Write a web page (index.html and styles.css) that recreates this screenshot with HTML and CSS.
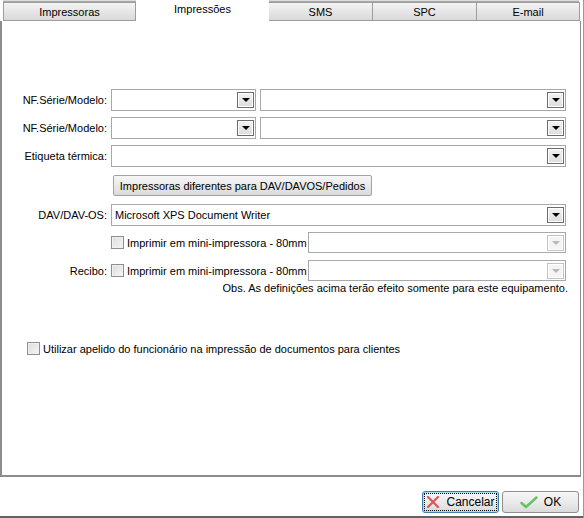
FILE: index.html
```html
<!DOCTYPE html>
<html>
<head>
<meta charset="utf-8">
<link rel="stylesheet" href="styles.css">
</head>
<body>
<div class="window">
  <div class="toprow"></div>
  <div class="tabs">
    <div class="tab t1">Impressoras</div>
    <div class="tab active t2">Impressões</div>
    <div class="tab t3">SMS</div>
    <div class="tab t4">SPC</div>
    <div class="tab t5">E-mail</div>
  </div>
  <div class="panel">
    <div class="row">
      <label class="lbl">NF.Série/Modelo:</label>
      <div class="combo w1"><span class="val"></span><span class="btn"><span class="arrow"></span></span></div>
      <div class="combo w2"><span class="val"></span><span class="btn"><span class="arrow"></span></span></div>
    </div>
    <div class="row">
      <label class="lbl">NF.Série/Modelo:</label>
      <div class="combo w1"><span class="val"></span><span class="btn"><span class="arrow"></span></span></div>
      <div class="combo w2"><span class="val"></span><span class="btn"><span class="arrow"></span></span></div>
    </div>
    <div class="row">
      <label class="lbl">Etiqueta térmica:</label>
      <div class="combo wfull"><span class="val"></span><span class="btn"><span class="arrow"></span></span></div>
    </div>
    <div class="btnrow">
      <button class="wbtn">Impressoras diferentes para DAV/DAVOS/Pedidos</button>
    </div>
    <div class="row dav">
      <label class="lbl">DAV/DAV-OS:</label>
      <div class="combo wfull"><span class="val">Microsoft XPS Document Writer</span><span class="btn"><span class="arrow"></span></span></div>
    </div>
    <div class="row chk">
      <label class="lbl"></label>
      <div class="check"><span class="box"></span><span>Imprimir em mini-impressora - 80mm</span></div>
      <div class="combo w3 disabled"><span class="val"></span><span class="btn"><span class="arrow"></span></span></div>
    </div>
    <div class="row chk">
      <label class="lbl">Recibo:</label>
      <div class="check"><span class="box"></span><span>Imprimir em mini-impressora - 80mm</span></div>
      <div class="combo w3 disabled"><span class="val"></span><span class="btn"><span class="arrow"></span></span></div>
    </div>
    <div class="obs">Obs. As definições acima terão efeito somente para este equipamento.</div>
    <div class="check apelido"><span class="box"></span><span>Utilizar apelido do funcionário na impressão de documentos para clientes</span></div>
  </div>
  <div class="footer">
    <button class="fbtn cancel">
      <span class="inner">
        <svg width="14" height="12" viewBox="0 0 14 12"><path d="M2 1 L12 11 M12 1 L2 11" stroke="#e0555a" stroke-width="2.2" fill="none" stroke-linecap="round"/></svg>
        <span>Cancelar</span>
      </span>
    </button>
    <button class="fbtn ok">
      <span class="inner">
        <svg width="18" height="13" viewBox="0 0 18 13"><path d="M1.5 7 L6 11 L16.5 1.5" stroke="#62c462" stroke-width="2.4" fill="none" stroke-linecap="round" stroke-linejoin="round"/></svg>
        <span>OK</span>
      </span>
    </button>
  </div>
  <div class="bottomline"></div>
</div>
</body>
</html>
```

FILE: styles.css
```css
* { box-sizing: border-box; }
html, body { margin: 0; padding: 0; }
body {
  width: 584px;
  height: 518px;
  background: #fff;
  font-family: "Liberation Sans", Arial, sans-serif;
  font-size: 11px;
  color: #000;
  overflow: hidden;
}
.window {
  width: 584px;
  height: 518px;
  display: flex;
  flex-direction: column;
  border-right: 1px solid #9a9a9a;
}
.toprow {
  height: 2px;
  margin-left: 3px;
  width: 576px;
  border-bottom: 1px solid #a8a8a8;
  background: #dcdcdc;
}
.tabs {
  display: flex;
  height: 19px;
  padding-left: 3px;
  position: relative;
  z-index: 2;
}
.tab {
  height: 19px;
  border: 1px solid #9d9d9d;
  border-left: none;
  background: linear-gradient(#f4f4f4, #e6e6e6 50%, #d9d9d9);
  text-align: center;
  line-height: 18px;
  color: #000;
}
.t1 { width: 133px; border-left: 1px solid #9d9d9d; }
.t2 { width: 133px; }
.t3 { width: 104px; }
.t4 { width: 104px; }
.t5 { width: 103px; }
.tab.active {
  background: #fff;
  border: none;
  line-height: 14px;
  margin-top: -2px;
  height: 22px;
  padding-top: 2px;
}
.panel {
  width: 581px;
  height: 456px;
  border-left: 2px solid #8c8c8c;
  border-bottom: 2px solid #8c8c8c;
  border-right: 1px solid #8c8c8c;
  padding-top: 68px;
  display: flex;
  flex-direction: column;
}
.row {
  display: flex;
  align-items: center;
  height: 22px;
  margin-bottom: 6px;
}
.lbl {
  width: 105px;
  text-align: right;
  margin-right: 4px;
  color: #000;
  white-space: nowrap;
}
.combo {
  height: 22px;
  border: 1px solid #a8a8a8;
  background: #fff;
  display: flex;
  align-items: center;
  justify-content: space-between;
  padding: 0 1px 0 3px;
  margin-right: 4px;
}
.combo .val { white-space: nowrap; }
.combo .btn {
  width: 17px;
  height: 16px;
  border: 1px solid #6d6d6d;
  box-shadow: inset 0 0 0 1px #fff;
  background: linear-gradient(#f3f3f3, #dcdcdc);
  display: flex;
  align-items: center;
  justify-content: center;
}
.combo .arrow {
  width: 0; height: 0;
  border-left: 4px solid transparent;
  border-right: 4px solid transparent;
  border-top: 4px solid #000;
}
.combo.disabled .btn {
  border-color: #c4c4c4;
  background: #f4f4f4;
}
.combo.disabled .arrow { border-top-color: #b8b8b8; }
.w1 { width: 145px; }
.w2 { width: 306px; }
.w3 { width: 258px; }
.wfull { width: 455px; }
.btnrow {
  height: 21px;
  margin: 2px 0 8px 111px;
}
.wbtn {
  width: 259px;
  height: 21px;
  border: 1px solid #a2a2a2;
  border-radius: 2px;
  background: linear-gradient(#f6f6f6, #e9e9e9 50%, #dadada);
  font-family: "Liberation Sans", Arial, sans-serif;
  font-size: 11px;
  color: #000;
  padding: 0;
  white-space: nowrap;
}
.row.dav { margin-bottom: 6px; }
.row.chk { height: 21px; margin-bottom: 7px; }
.row.chk .combo { height: 21px; }
.check {
  display: flex;
  align-items: center;
  white-space: nowrap;
  width: 197px;
}
.box {
  width: 13px;
  height: 13px;
  border: 1px solid #8e8f8f;
  background: linear-gradient(135deg, #dcdcdc, #f6f6f6);
  box-shadow: inset 0 0 0 1px #f0f0f0;
  margin-right: 3px;
  flex: none;
}
.obs {
  margin-top: -7px;
  width: 566px;
  text-align: right;
  height: 14px;
  line-height: 14px;
}
.check.apelido {
  margin-top: 47px;
  margin-left: 25px;
  width: auto;
}
.footer {
  flex: 1;
  display: flex;
  justify-content: flex-end;
  align-items: flex-start;
  padding-top: 14px;
  padding-right: 4px;
  gap: 3px;
}
.fbtn {
  height: 22px;
  border: 1px solid #8f8f8f;
  border-radius: 3px;
  background: linear-gradient(#f6f6f6, #ebebeb 50%, #dadada);
  font-family: "Liberation Sans", Arial, sans-serif;
  font-size: 12px;
  color: #000;
  padding: 1px;
  display: flex;
}
.fbtn .inner {
  flex: 1;
  display: flex;
  align-items: center;
  justify-content: center;
  gap: 6px;
}
.cancel {
  width: 77px;
  border-color: #3c7fb1;
  box-shadow: inset 0 0 0 1px #9fdcf5;
}
.cancel .inner { border: 1px dotted #000; }
.ok { width: 77px; }
.bottomline {
  height: 2px;
  background: #5f6468;
}
```
